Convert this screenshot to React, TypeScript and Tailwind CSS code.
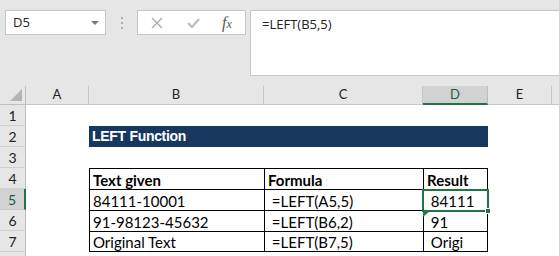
import React from 'react';

const cols = [
    { key: 'A', w: 'w-[63px]' },
    { key: 'B', w: 'w-[175px]' },
    { key: 'C', w: 'w-[159px]' },
    { key: 'D', w: 'w-[65px]' },
    { key: 'E', w: 'w-[64px]' }
];

const tableRows = [
    ['Text given', 'Formula', 'Result'],
    ['84111-10001', ' =LEFT(A5,5)', ' 84111'],
    ['91-98123-45632', ' =LEFT(B6,2)', ' 91'],
    ['Original Text', ' =LEFT(B7,5)', ' Origi']
];

const cellFont = "font-['Lato','Open_Sans',sans-serif] text-[15px] text-black";

const RowHead = ({ n, active }: { n?: number; active?: boolean }) => (
    <div
        className={
            active
                ? 'w-[26px] shrink-0 flex items-center justify-center bg-[#d2d2d2] border-b border-[#c8c8c8] border-r-2 border-r-[#217346] text-[#1d5c3a]'
                : 'w-[26px] shrink-0 flex items-center justify-center bg-[#e6e6e6] border-b border-[#d0d0d0] border-r border-r-[#bdbdbd] text-[#222]'
        }
    >
        {n}
    </div>
);

const App = () => {
    return (
        <div className="w-[559px] h-[256px] overflow-hidden bg-[#e6e6e6] relative font-['Open_Sans',sans-serif]">
            {/* toolbar */}
            <div className="flex items-start h-[86px] pt-[10px]">
                <div className="ml-[5px] w-[101px] h-[25px] bg-white border border-[#c6c6c6] flex items-center pl-[7px] pr-[6px] text-[13px] text-[#222]">
                    <span className="flex-1">D5</span>
                    <span className="w-0 h-0 border-l-[4px] border-r-[4px] border-t-[4px] border-l-transparent border-r-transparent border-t-[#7a7a7a]" />
                </div>
                <div className="w-[31px] h-[25px] flex flex-col items-center justify-center gap-[3px]">
                    <span className="w-[2px] h-[2px] bg-[#b0b0b0]" />
                    <span className="w-[2px] h-[2px] bg-[#b0b0b0]" />
                    <span className="w-[2px] h-[2px] bg-[#b0b0b0]" />
                </div>
                <div className="w-[109px] h-[25px] bg-white border border-[#c6c6c6] flex items-center">
                    <svg width="12" height="12" viewBox="0 0 12 12" className="ml-[13px]">
                        <path d="M1 1 L11 11 M11 1 L1 11" stroke="#a8a8a8" strokeWidth="1.3" fill="none" />
                    </svg>
                    <svg width="13" height="11" viewBox="0 0 13 11" className="ml-[24px]">
                        <path d="M1 6 L5 10 L12 2" stroke="#bcbcbc" strokeWidth="2.2" fill="none" />
                    </svg>
                    <span className="ml-[22px] font-['Liberation_Serif',serif] italic text-[16px] text-[#555] leading-none">
                        f<span className="text-[12px]">x</span>
                    </span>
                </div>
                <div className="ml-[4px] flex-1 h-[66px] bg-white border border-r-0 border-[#c6c6c6] pl-[11px] pt-[4px] text-[13px] text-[#222]">
                    =LEFT(B5,5)
                </div>
            </div>

            {/* column headers */}
            <div className="flex h-[19px] text-[13px] font-['Lato',sans-serif]">
                <div className="w-[26px] shrink-0 bg-[#e6e6e6] border-r border-b border-[#bdbdbd] flex items-end justify-end pr-[3px] pb-[3px]">
                    <svg width="12" height="12" viewBox="0 0 12 12">
                        <path d="M12 0 V12 H0 Z" fill="#b4b4b4" />
                    </svg>
                </div>
                {cols.map((c) => (
                    <div
                        key={c.key}
                        className={
                            c.key === 'D'
                                ? `${c.w} shrink-0 flex items-center justify-center bg-[#d2d2d2] border-r border-[#bdbdbd] border-b-2 border-b-[#217346] text-[#1d5c3a]`
                                : `${c.w} shrink-0 flex items-center justify-center bg-[#e6e6e6] border-r border-b border-[#c6c6c6] text-[#222]`
                        }
                    >
                        {c.key}
                    </div>
                ))}
                <div className="flex-1 bg-[#e6e6e6] border-b border-[#c6c6c6]" />
            </div>

            {/* rows */}
            <div className="flex flex-col text-[14px] font-['Lato',sans-serif]">
                <div className="flex h-[21px]">
                    <RowHead n={1} />
                    <div className="flex-1 bg-white" />
                </div>
                <div className="flex h-[21px]">
                    <RowHead n={2} />
                    <div className="flex-1 bg-white flex">
                        <div className="w-[63px]" />
                        <div className="w-[399px] bg-[#17375e] text-white font-['Liberation_Sans',sans-serif] font-bold text-[14px] pl-[3px] flex items-center tracking-[-0.3px]">
                            LEFT Function
                        </div>
                    </div>
                </div>
                <div className="flex h-[21px]">
                    <RowHead n={3} />
                    <div className="flex-1 bg-white" />
                </div>
                {tableRows.map((r, i) => (
                    <div key={i} className="flex h-[21px]">
                        <RowHead n={i + 4} active={i === 1} />
                        <div className="flex-1 bg-white flex">
                            <div className="w-[63px] shrink-0" />
                            {r.map((t, j) => (
                                <div
                                    key={j}
                                    className={[
                                        j === 0 ? 'w-[175px]' : j === 1 ? 'w-[159px]' : 'w-[65px] border-r',
                                        'shrink-0 border-l border-t border-black pl-[3px] flex items-end pb-[1px] whitespace-pre leading-none',
                                        i === 3 ? 'border-b' : '',
                                        i === 0 ? 'font-bold' : '',
                                        cellFont
                                    ].join(' ')}
                                >
                                    {t}
                                </div>
                            ))}
                        </div>
                    </div>
                ))}
                <div className="flex h-[21px]">
                    <RowHead />
                    <div className="flex-1 bg-white" />
                </div>
            </div>

            {/* active cell D5 */}
            <div className="absolute left-[422px] top-[189px] w-[67px] h-[23px] border-2 border-[#217346]" />
            <div className="absolute left-[485px] top-[208px] w-[6px] h-[6px] bg-[#217346] border border-white" />
            <svg className="absolute left-[423px] top-[211px]" width="7" height="6" viewBox="0 0 7 6">
                <path d="M0 0 H7 L0 6 Z" fill="#1e7b45" />
            </svg>
        </div>
    );
};

export default App;
